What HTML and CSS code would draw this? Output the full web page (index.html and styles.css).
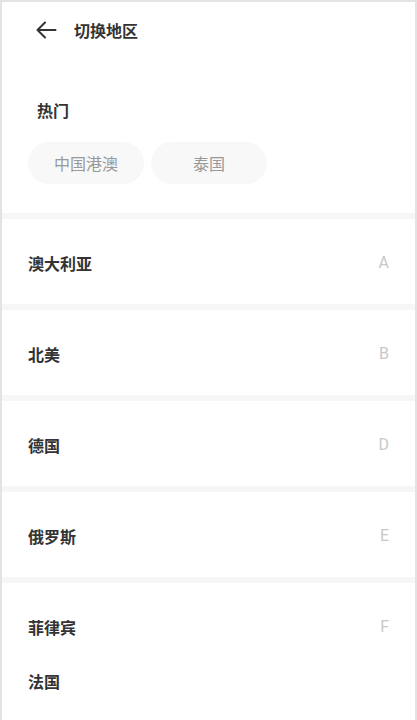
FILE: index.html
```html
<!DOCTYPE html>
<html lang="zh-CN">
<head>
<meta charset="utf-8">
<title>切换地区</title>
<link rel="stylesheet" href="styles.css">
</head>
<body>
<div class="page">
  <header class="topbar">
    <svg class="back" width="22" height="22" viewBox="0 0 22 22" aria-hidden="true">
      <path d="M20.5 11H2.5M10 3.5L2.5 11L10 18.5" fill="none" stroke="#333" stroke-width="2" stroke-linecap="round" stroke-linejoin="round"/>
    </svg>
    <h1 class="title">切换地区</h1>
  </header>

  <section class="hot">
    <div class="hot-label">热门</div>
    <div class="chips">
      <span class="chip">中国港澳</span>
      <span class="chip">泰国</span>
    </div>
  </section>

  <section class="group">
    <ul class="names"><li>澳大利亚</li></ul>
    <span class="letter">A</span>
  </section>
  <section class="group">
    <ul class="names"><li>北美</li></ul>
    <span class="letter">B</span>
  </section>
  <section class="group">
    <ul class="names"><li>德国</li></ul>
    <span class="letter">D</span>
  </section>
  <section class="group">
    <ul class="names"><li>俄罗斯</li></ul>
    <span class="letter">E</span>
  </section>
  <section class="group">
    <ul class="names"><li>菲律宾</li><li>法国</li></ul>
    <span class="letter">F</span>
  </section>
</div>
</body>
</html>
```
FILE: styles.css
```css
* { box-sizing: border-box; }
html, body {
  margin: 0;
  padding: 0;
  background: #fff;
}
body {
  font-family: "Noto Sans CJK SC", "Noto Sans", "Liberation Sans", sans-serif;
  color: #333;
  overflow: hidden;
}
.page {
  width: 417px;
  height: 720px;
  border: 2px solid #e3e3e3;
  border-bottom: none;
  overflow: hidden;
  background: #fff;
}
.topbar {
  height: 56px;
  display: flex;
  align-items: center;
  padding-left: 33px;
  gap: 17px;
}
.back { display: block; }
.title {
  margin: 0;
  font-size: 16px;
  font-weight: 700;
  color: #333;
  line-height: 22px;
}
.hot {
  padding: 41px 0 29px 35px;
}
.hot-label {
  font-size: 16px;
  font-weight: 700;
  line-height: 22px;
  color: #333;
}
.chips {
  display: flex;
  gap: 7px;
  margin-top: 21px;
  margin-left: -9px;
}
.chip {
  width: 116px;
  height: 42px;
  border-radius: 21px;
  background: #f8f8f8;
  color: #999;
  font-size: 16px;
  display: flex;
  align-items: center;
  justify-content: center;
}
.group {
  border-top: 6px solid #f6f6f6;
  display: flex;
  justify-content: space-between;
  align-items: flex-start;
  padding: 17px 26px 14px 26px;
}
.names {
  list-style: none;
  margin: 0;
  padding: 0;
}
.names li {
  height: 54px;
  line-height: 54px;
  font-size: 16px;
  font-weight: 700;
  color: #333;
}
.letter {
  height: 54px;
  line-height: 54px;
  font-size: 16px;
  color: #c8c8c8;
  font-family: "Roboto", "Liberation Sans", sans-serif;
}
```
